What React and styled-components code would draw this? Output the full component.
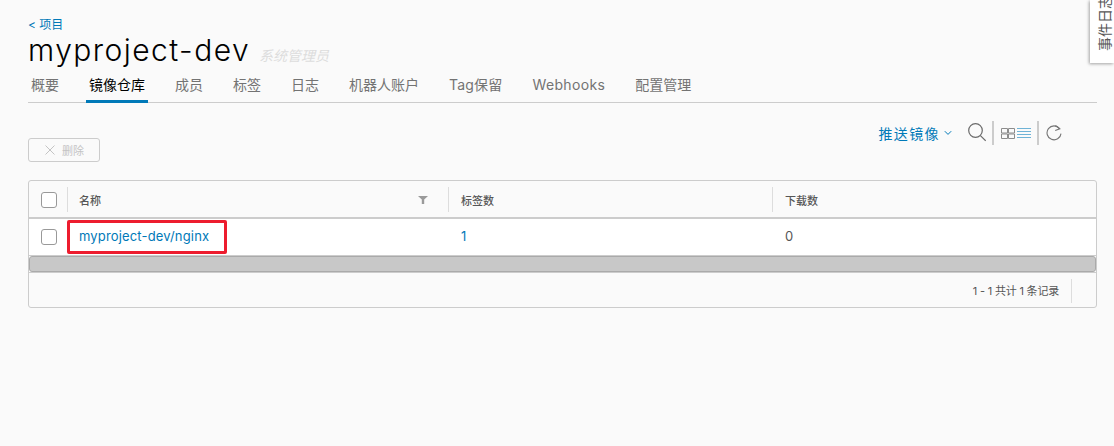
import styled, { createGlobalStyle } from "styled-components";

const CJK = `"Noto Sans CJK SC", sans-serif`;

const GlobalStyle = createGlobalStyle`
  html, body {
    margin: 0;
    padding: 0;
    background: #fafafa;
    font-family: Inter, ${CJK};
    color: #565656;
  }
  * {
    box-sizing: border-box;
  }
`;

const Page = styled.div`
  position: relative;
  width: 1114px;
  height: 446px;
  overflow: hidden;
  padding: 18px 17px 0 28px;
`;

const Back = styled.a`
  display: block;
  height: 14px;
  font-size: 12px;
  line-height: 14px;
  color: #0079b8;
`;

const TitleRow = styled.div`
  display: flex;
  align-items: baseline;
  gap: 9px;
  height: 38px;
  padding-top: 1px;
`;

const Title = styled.h1`
  margin: 0;
  font-size: 30px;
  line-height: 34px;
  font-weight: 300;
  color: #000;
  letter-spacing: 1.45px;
`;

const Role = styled.span`
  font-size: 14px;
  font-style: italic;
  color: #ddd;
`;

const Tabs = styled.nav`
  display: flex;
  gap: 24px;
  height: 33px;
  border-bottom: 1px solid #ccc;
`;

const Tab = styled.a`
  display: block;
  padding: 4px 3px 0;
  height: 33px;
  font-size: 14px;
  line-height: 22px;
  letter-spacing: ${(p) => p.$spacing || 0}px;
  color: ${(p) => (p.$active ? "#000" : "#737373")};
  border-bottom: 3px solid ${(p) => (p.$active ? "#0079b8" : "transparent")};
`;

const Toolbar = styled.div`
  display: flex;
  justify-content: space-between;
  height: 77px;
`;

const DeleteButton = styled.button`
  display: flex;
  align-items: center;
  justify-content: center;
  gap: 6px;
  align-self: flex-end;
  margin-bottom: 18px;
  width: 72px;
  height: 24px;
  padding: 0;
  background: transparent;
  border: 1px solid #ccc;
  border-radius: 3px;
  font-family: inherit;
  font-size: 11px;
  color: #c4c4c4;
`;

const Actions = styled.div`
  display: flex;
  align-items: center;
  height: 24px;
  margin: 18px 35px 0 0;
`;

const PushLink = styled.a`
  display: flex;
  align-items: center;
  gap: 4px;
  margin-right: 16px;
  font-size: 14px;
  letter-spacing: 1.4px;
  color: #0079b8;
`;

const Divider = styled.span`
  width: 2px;
  height: 24px;
  margin: 0 7px 0 6px;
  background: #ccc;
`;

const ViewToggle = styled.div`
  display: flex;
  gap: 2px;
`;

const Table = styled.div`
  width: 1069px;
  border: 1px solid #ccc;
  border-radius: 3px;
  background: #fafafa;
`;

const Columns = styled.div`
  display: grid;
  grid-template-columns: 38px 381px 324px 1fr;
  align-items: center;
`;

const HeadRow = styled(Columns)`
  height: 38px;
  padding-top: 1px;
  border-bottom: 2px solid #ccc;
`;

const BodyRow = styled(Columns)`
  height: 37px;
  background: #fff;
  border-bottom: 1px solid #ccc;
`;

const CheckCell = styled.div`
  display: flex;
  padding-left: 12px;
`;

const Check = styled.span`
  display: block;
  width: 16px;
  height: 16px;
  background: #fff;
  border: 1px solid #999;
  border-radius: 3px;
`;

const HeadCell = styled.div`
  display: flex;
  align-items: center;
  justify-content: space-between;
  height: 25px;
  padding: 0 20px 0 ${(p) => p.$inset || 12}px;
  border-left: 1px solid #ddd;
  font-size: 11px;
  font-weight: 500;
  color: #565656;
`;

const Cell = styled.div`
  position: relative;
  display: flex;
  align-items: center;
  align-self: stretch;
  padding: 0 0 2px ${(p) => (p.$name ? 12 : 13)}px;
  font-size: 13px;
  line-height: 18px;
  letter-spacing: 0.16px;
  color: ${(p) => (p.$link ? "#0079b8" : "#565656")};
`;

const Highlight = styled.span`
  position: absolute;
  left: 0;
  top: 1px;
  width: 160px;
  height: 34px;
  border: 3px solid #ed1c2e;
  border-radius: 2px;
`;

const ScrollTrack = styled.div`
  height: 16px;
  background: #c8c8c8;
  border: 1px solid #aaa;
  border-radius: 3px;
`;

const Footer = styled.div`
  display: flex;
  align-items: center;
  justify-content: flex-end;
  height: 35px;
  padding-right: 24px;
  border-top: 1px solid #ccc;
  font-size: 11px;
  letter-spacing: -0.2px;
  color: #565656;
`;

const FooterRule = styled.span`
  width: 1px;
  height: 24px;
  margin: 2px 0 0 12px;
  background: #ddd;
`;

const SideTab = styled.div`
  position: absolute;
  top: 0;
  right: 0;
  display: flex;
  justify-content: center;
  align-items: flex-end;
  width: 24px;
  height: 63px;
  padding-left: 5px;
  background: #fff;
  box-shadow: -1px 1px 3px rgba(0, 0, 0, 0.35);
  overflow: hidden;
`;

const SideLabel = styled.span`
  flex: none;
  margin-bottom: 12px;
  writing-mode: vertical-rl;
  text-orientation: sideways;
  transform: rotate(180deg);
  font-size: 14px;
  line-height: 18px;
  color: #565656;
  white-space: nowrap;
`;

function CloseIcon() {
  return (
    <svg width="12" height="12" viewBox="0 0 12 12" fill="none" stroke="#c4c4c4">
      <path d="M1.5 1.5l9 9M10.5 1.5l-9 9" />
    </svg>
  );
}

function ChevronIcon() {
  return (
    <svg width="8" height="6" viewBox="0 0 8 6" fill="none" stroke="#0079b8">
      <path d="M.8 1.2L4 4.4l3.2-3.2" />
    </svg>
  );
}

function SearchIcon() {
  return (
    <svg width="18" height="20" viewBox="0 0 18 20" fill="none" stroke="#6a6a6a" strokeWidth="1.2">
      <circle cx="7.5" cy="7.5" r="6.8" />
      <path d="M12.4 12.6l5.3 5.3" />
    </svg>
  );
}

function GridIcon() {
  return (
    <svg width="14" height="11" viewBox="0 0 14 11" fill="none" stroke="#8c8c8c">
      <path d="M.5.5h6v4.5h-6zM7.5.5h6v4.5h-6zM.5 6h6v4.5h-6zM7.5 6h6v4.5h-6z" />
    </svg>
  );
}

function ListIcon() {
  return (
    <svg width="14" height="11" viewBox="0 0 14 11" fill="none" stroke="#6fb3d6">
      <path d="M0 .5h14M0 3.5h14M0 6.5h14M0 9.5h14" />
    </svg>
  );
}

function RefreshIcon() {
  return (
    <svg width="16" height="18" viewBox="0 0 16 18" fill="none" stroke="#757575" strokeWidth="1.1">
      <path d="M13.6 4.6A7 7 0 1 0 15 9.6" />
      <path d="M9.4 1.4l4.4 3.4-4.6 1.6" />
    </svg>
  );
}

function FilterIcon() {
  return (
    <svg width="10" height="8" viewBox="0 0 10 8" fill="#9a9a9a">
      <path d="M0 0h10L6.2 3.6V8H3.8V3.6z" />
    </svg>
  );
}

const TABS = [
  { name: "概要" },
  { name: "镜像仓库", active: true },
  { name: "成员" },
  { name: "标签" },
  { name: "日志" },
  { name: "机器人账户" },
  { name: "Tag保留", spacing: 0.2 },
  { name: "Webhooks", spacing: 0.35 },
  { name: "配置管理" },
];

export default function App() {
  return (
    <Page>
      <GlobalStyle />
      <Back>&lt; 项目</Back>
      <TitleRow>
        <Title>myproject-dev</Title>
        <Role>系统管理员</Role>
      </TitleRow>
      <Tabs>
        {TABS.map((tab) => (
          <Tab key={tab.name} $active={tab.active} $spacing={tab.spacing}>
            {tab.name}
          </Tab>
        ))}
      </Tabs>
      <Toolbar>
        <DeleteButton>
          <CloseIcon />
          删除
        </DeleteButton>
        <Actions>
          <PushLink>
            推送镜像
            <ChevronIcon />
          </PushLink>
          <SearchIcon />
          <Divider />
          <ViewToggle>
            <GridIcon />
            <ListIcon />
          </ViewToggle>
          <Divider />
          <RefreshIcon />
        </Actions>
      </Toolbar>
      <Table>
        <HeadRow>
          <CheckCell>
            <Check />
          </CheckCell>
          <HeadCell $inset={11}>
            名称
            <FilterIcon />
          </HeadCell>
          <HeadCell>标签数</HeadCell>
          <HeadCell>下载数</HeadCell>
        </HeadRow>
        <BodyRow>
          <CheckCell>
            <Check />
          </CheckCell>
          <Cell $link $name>
            myproject-dev/nginx
            <Highlight />
          </Cell>
          <Cell $link>1</Cell>
          <Cell>0</Cell>
        </BodyRow>
        <ScrollTrack />
        <Footer>
          1 - 1 共计 1 条记录
          <FooterRule />
        </Footer>
      </Table>
      <SideTab>
        <SideLabel>事件日志</SideLabel>
      </SideTab>
    </Page>
  );
}
